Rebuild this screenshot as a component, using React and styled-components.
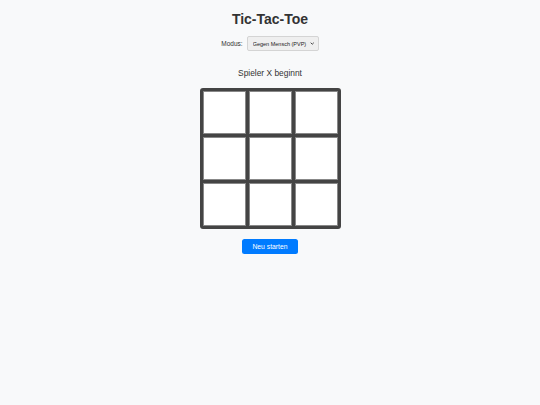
import React, { useState } from "react";
import styled, { createGlobalStyle } from "styled-components";

const GlobalStyle = createGlobalStyle`
  html, body {
    margin: 0;
    padding: 0;
    background: #f8f9fa;
    font-family: "Liberation Sans", Arial, sans-serif;
    color: #333;
  }
`;

function App() {
  const [board, setBoard] = useState(Array(9).fill(null));
  const [player, setPlayer] = useState("X");
  const [mode, setMode] = useState("pvp");

  const play = (i) => {
    if (board[i]) return;
    const next = [...board];
    next[i] = player;
    setBoard(next);
    setPlayer(player === "X" ? "O" : "X");
  };

  const restart = () => {
    setBoard(Array(9).fill(null));
    setPlayer("X");
  };

  const started = board.some((c) => c);

  return (
    <Page>
      <GlobalStyle />
      <Title>Tic-Tac-Toe</Title>
      <ModeRow>
        <Label htmlFor="mode">Modus:</Label>
        <SelectWrap>
          <Select id="mode" value={mode} onChange={(e) => setMode(e.target.value)}>
            <option value="pvp">Gegen Mensch (PVP)</option>
            <option value="pve">Gegen Computer (PVE)</option>
          </Select>
          <Chevron viewBox="0 0 10 6" aria-hidden="true">
            <path d="M1.5 1.2 L5 4.6 L8.5 1.2" fill="none" stroke="#222" strokeWidth="1.8" />
          </Chevron>
        </SelectWrap>
      </ModeRow>
      <Status>{started ? `Spieler ${player} ist dran` : `Spieler ${player} beginnt`}</Status>
      <Board>
        {board.map((cell, i) => (
          <Cell key={i} onClick={() => play(i)}>
            {cell}
          </Cell>
        ))}
      </Board>
      <RestartButton onClick={restart}>Neu starten</RestartButton>
    </Page>
  );
}

const Page = styled.div`
  display: flex;
  flex-direction: column;
  align-items: center;
  padding-top: 11px;
`;

const Title = styled.h1`
  margin: 0;
  font-size: 14px;
  line-height: 16px;
  font-weight: bold;
  color: #333;
`;

const ModeRow = styled.div`
  display: flex;
  align-items: center;
  gap: 4px;
  margin-top: 9px;
`;

const Label = styled.label`
  font-size: 6.5px;
  color: #333;
`;

const SelectWrap = styled.div`
  position: relative;
  display: flex;
`;

const Select = styled.select`
  appearance: none;
  width: 72px;
  height: 15px;
  padding: 0 0 0 5px;
  font-family: "Liberation Sans", Arial, sans-serif;
  font-size: 5.5px;
  color: #222;
  background: #efefef;
  border: 1px solid #d4d4d4;
  border-radius: 2px;
  outline: none;
`;

const Chevron = styled.svg`
  position: absolute;
  right: 4px;
  top: 5.5px;
  width: 4.5px;
  height: 3px;
  pointer-events: none;
`;

const Status = styled.p`
  margin: 17px 0 0;
  font-size: 8.4px;
  line-height: 10px;
  color: #333;
`;

const Board = styled.div`
  display: grid;
  grid-template-columns: repeat(3, 43px);
  grid-template-rows: repeat(3, 43px);
  gap: 3px;
  padding: 3px;
  margin-top: 10px;
  background: #444;
  border-radius: 3px;
`;

const Cell = styled.button`
  box-sizing: border-box;
  width: 43px;
  height: 43px;
  padding: 0;
  background: #fff;
  border: 1px solid #888;
  font-family: "Liberation Sans", Arial, sans-serif;
  font-size: 24px;
  font-weight: bold;
  color: #333;
  cursor: pointer;
`;

const RestartButton = styled.button`
  margin-top: 10px;
  width: 56px;
  height: 15px;
  padding: 0;
  font-family: "Liberation Sans", Arial, sans-serif;
  font-size: 6.8px;
  color: #fff;
  background: #007bff;
  border: none;
  border-radius: 2.5px;
  cursor: pointer;
`;

export default App;
